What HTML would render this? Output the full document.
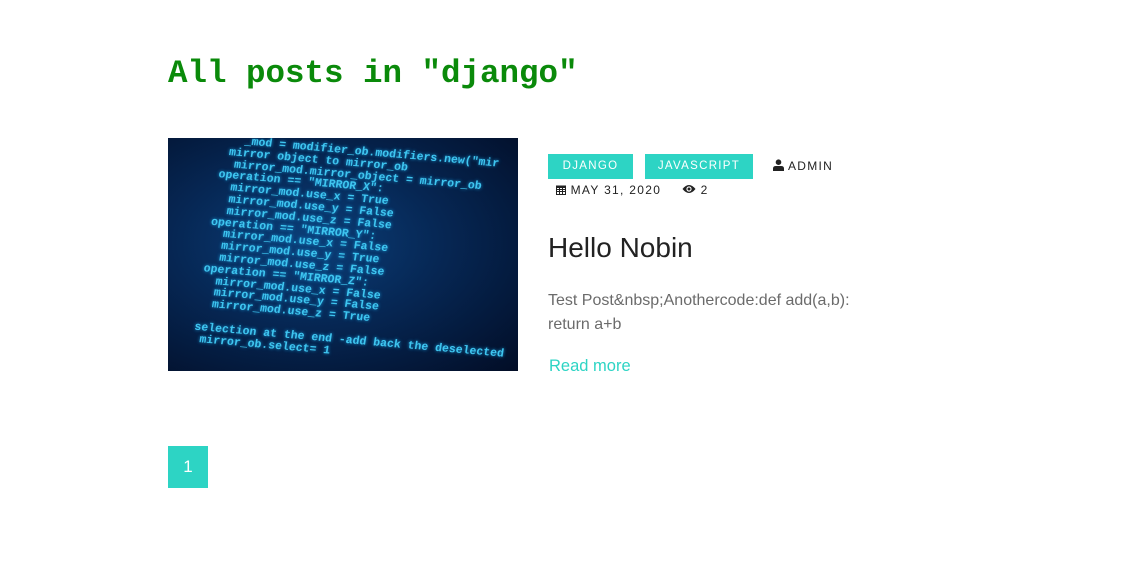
<!DOCTYPE html>
<html><head><style>
body{margin:0;background:#fff;width:1129px;height:566px;overflow:hidden;font-family:"Liberation Sans",sans-serif}
h1{position:absolute;left:168px;top:55px;margin:0;font-family:"Liberation Mono",monospace;font-weight:bold;font-size:32.5px;color:#0a8a0a}
.img{position:absolute;left:168px;top:138px;width:350px;height:233px;overflow:hidden;background:radial-gradient(ellipse at 40% 45%,#0b3f7a 0%,#062754 45%,#020d26 100%)}
.img pre{position:absolute;left:50px;top:-4px;margin:0;font-family:"Liberation Mono",monospace;font-size:11.5px;line-height:11.8px;color:#3fc6f0;font-weight:bold;transform:rotate(5deg) skewX(-4deg);transform-origin:0 0;text-shadow:0 0 3px #1aa0e0}
.tag{position:absolute;top:154px;height:25px;background:#2dd4c4;color:#fff;font-size:11.5px;letter-spacing:1.3px;line-height:25px;text-align:center}
.meta{position:absolute;font-size:12px;letter-spacing:1.3px;color:#222}
.title{position:absolute;left:548px;top:232px;font-size:28px;color:#222}
.ex{position:absolute;left:548px;top:289px;font-size:16px;line-height:24px;color:#6b6b6b;width:340px}
.rm{position:absolute;left:549px;top:357px;font-size:16.5px;color:#2dd4c4}
.pg{position:absolute;left:168px;top:446px;width:40px;height:42px;background:#2dd4c4;color:#fff;font-size:17px;line-height:42px;text-align:center}
</style></head><body>
<h1>All posts in "django"</h1>
<div class="img"><pre>    _mod = modifier_ob.modifiers.new("mir
  mirror object to mirror_ob
   mirror_mod.mirror_object = mirror_ob
 operation == "MIRROR_X":
   mirror_mod.use_x = True
   mirror_mod.use_y = False
   mirror_mod.use_z = False
 operation == "MIRROR_Y":
   mirror_mod.use_x = False
   mirror_mod.use_y = True
   mirror_mod.use_z = False
 operation == "MIRROR_Z":
   mirror_mod.use_x = False
   mirror_mod.use_y = False
   mirror_mod.use_z = True

 selection at the end -add back the deselected
  mirror_ob.select= 1</pre></div>
<div class="tag" style="left:548px;width:85px">DJANGO</div>
<div class="tag" style="left:645px;width:108px">JAVASCRIPT</div>
<div class="meta" style="left:773px;top:159px"><svg width="11" height="12" viewBox="0 0 11 12" style="vertical-align:-1px"><circle cx="5.5" cy="3.2" r="2.8" fill="#222"/><path d="M0 12V9.5Q0 7 3 7H8Q11 7 11 9.5V12Z" fill="#222"/></svg> ADMIN</div>
<div class="meta" style="left:556px;top:183px"><svg width="10" height="11" viewBox="0 0 10 11" style="vertical-align:-1px"><rect x="0" y="1.5" width="10" height="9.5" fill="#222"/><rect x="1" y="4" width="8" height="6" fill="#fff"/><path d="M1 5.5h8M1 7.5h8M3.5 4v6M6.5 4v6" stroke="#222" stroke-width="1"/></svg> MAY 31, 2020</div>
<div class="meta" style="left:682px;top:183px"><svg width="14" height="10" viewBox="0 0 14 10" style="vertical-align:0"><path d="M0.5 5Q7 -3 13.5 5Q7 13 0.5 5Z" fill="#222"/><circle cx="7" cy="5" r="2.6" fill="#fff"/><circle cx="7" cy="5" r="1.5" fill="#222"/></svg> 2</div>
<div class="title">Hello Nobin</div>
<div class="ex">Test Post&amp;nbsp;Anothercode:def add(a,b):<br>return a+b</div>
<div class="rm">Read more</div>
<div class="pg">1</div>
</body></html>
